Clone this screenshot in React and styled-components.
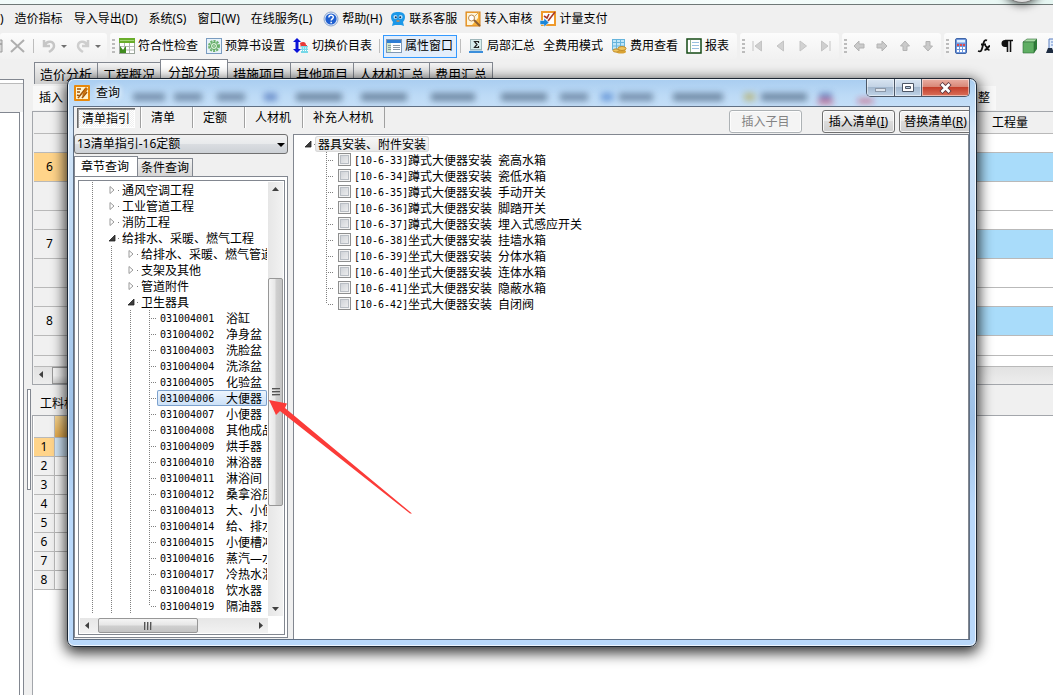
import React from "react";
import styled, { createGlobalStyle, css } from "styled-components";

const MENUS = [
  { id: 1, name: ")" },
  { id: 2, name: "造价指标" },
  { id: 3, name: "导入导出(D)" },
  { id: 4, name: "系统(S)" },
  { id: 5, name: "窗口(W)" },
  { id: 6, name: "在线服务(L)" },
  { id: 7, name: "帮助(H)", icon: "help" },
  { id: 8, name: "联系客服", icon: "service" },
  { id: 9, name: "转入审核", icon: "audit" },
  { id: 10, name: "计量支付", icon: "pay" },
];

const PAGE_TABS = ["造价分析", "工程概况", "分部分项", "措施项目", "其他项目", "人材机汇总", "费用汇总"];

const GRID_ROWS = [
  { id: "a", height: 19 },
  { id: "b", height: 29, no: "6", marked: true, filled: true },
  { id: "c", height: 29 },
  { id: "d", height: 19 },
  { id: "e", height: 29, no: "7", filled: true },
  { id: "f", height: 29 },
  { id: "g", height: 19 },
  { id: "h", height: 29, no: "8", filled: true },
  { id: "i", height: 20 },
  { id: "j", height: 11 },
];

const QUERY_TABS = ["清单", "定额", "人材机", "补充人材机"];

const TREE = [
  { level: 1, name: "通风空调工程" },
  { level: 1, name: "工业管道工程" },
  { level: 1, name: "消防工程" },
  { level: 1, name: "给排水、采暖、燃气工程", open: true },
  { level: 2, name: "给排水、采暖、燃气管道" },
  { level: 2, name: "支架及其他" },
  { level: 2, name: "管道附件" },
  { level: 2, name: "卫生器具", open: true },
];

const LEAVES = [
  "浴缸",
  "净身盆",
  "洗脸盆",
  "洗涤盆",
  "化验盆",
  "大便器",
  "小便器",
  "其他成品",
  "烘手器",
  "淋浴器",
  "淋浴间",
  "桑拿浴房",
  "大、小便",
  "给、排水",
  "小便槽冲",
  "蒸汽—水",
  "冷热水混",
  "饮水器",
  "隔油器",
].map((name, i) => ({ code: `0310040${String(i + 1).padStart(2, "0")}`, name }));

const QUOTAS = [
  { code: "[10-6-33]", name: "蹲式大便器安装", spec: "瓷高水箱" },
  { code: "[10-6-34]", name: "蹲式大便器安装", spec: "瓷低水箱" },
  { code: "[10-6-35]", name: "蹲式大便器安装", spec: "手动开关" },
  { code: "[10-6-36]", name: "蹲式大便器安装", spec: "脚踏开关" },
  { code: "[10-6-37]", name: "蹲式大便器安装", spec: "埋入式感应开关" },
  { code: "[10-6-38]", name: "坐式大便器安装", spec: "挂墙水箱" },
  { code: "[10-6-39]", name: "坐式大便器安装", spec: "分体水箱" },
  { code: "[10-6-40]", name: "坐式大便器安装", spec: "连体水箱" },
  { code: "[10-6-41]", name: "坐式大便器安装", spec: "隐蔽水箱" },
  { code: "[10-6-42]", name: "坐式大便器安装", spec: "自闭阀" },
];

// x, width and colour of what shows through the glass title bar
const GLASS_SPOTS = [
  [60, 32, "#47617f"],
  [101, 28, "#47617f"],
  [144, 28, "#47617f"],
  [191, 13, "#3a62b0"],
  [223, 46, "#3c5470"],
  [288, 46, "#3c5470"],
  [358, 44, "#3c5470"],
  [428, 46, "#3c5470"],
  [487, 28, "#47617f"],
  [528, 12, "#3a74c8"],
  [546, 34, "#47617f"],
  [600, 50, "#3c5470"],
  [671, 11, "#b3a54a"],
  [688, 46, "#3c5470"],
  [746, 13, "#3a4f96"],
];

const ICONS = {
  help: (
    <>
      <circle cx="8" cy="8" r="7" fill="#dfe9f8" stroke="#8ea6cc" />
      <circle cx="8" cy="8" r="5.6" fill="#1f5fd0" />
      <path d="M5.9 6.4c0-2.9 4.4-2.8 4.4-.2 0 1.6-2.1 1.6-2.1 3.3M8.2 10.8v1.5" fill="none" stroke="#fff" strokeWidth="1.5" />
    </>
  ),
  service: (
    <>
      <path d="M1 6C1 2 4 1 8 1s7 1 7 5c0 2-1 4-2 5l1 4-3-1H5l-3 1 1-4C2 10 1 8 1 6z" fill="#1c98e8" />
      <circle cx="5.4" cy="6" r="2" fill="#bfe2fa" />
      <circle cx="10.6" cy="6" r="2" fill="#bfe2fa" />
      <circle cx="5.8" cy="6.2" r="1" fill="#12365c" />
      <circle cx="10.2" cy="6.2" r="1" fill="#12365c" />
      <path d="M6.5 10h3" stroke="#e98a3c" strokeWidth="1.4" />
    </>
  ),
  audit: (
    <>
      <rect x="1" y="1" width="14" height="14" fill="#f7b23a" stroke="#d9821a" />
      <path d="M2 2h11v5l-6 7H2z" fill="#fff4d8" />
      <circle cx="6.5" cy="7" r="3" fill="#fff" stroke="#b98a50" />
      <path d="M9 9l6 6" stroke="#8a5d33" strokeWidth="2" />
      <path d="M14 1L9 6" stroke="#c9a870" />
    </>
  ),
  pay: (
    <>
      <rect x="2" y="1" width="13" height="13" fill="#fff" stroke="#ef9a2b" strokeWidth="2" />
      <path d="M4 5l3 2 2-4M8 10l7-9" fill="none" stroke="#a83a2a" strokeWidth="1.6" />
      <path d="M0 9.5h4V7l5 4.5L4 16v-2.5H0z" fill="#1b86d8" stroke="#fff" strokeWidth=".5" />
    </>
  ),
  check: (
    <>
      <rect x=".5" y=".5" width="15" height="15" fill="#fff" stroke="#9aa59a" />
      <path d="M0 0h16v5H0z" fill="#69ad2b" />
      <path d="M1 2.5h14" stroke="#a7d67a" />
      <path d="M5.5 5v10M10.5 5v10M1 8.5h14M1 12h14" stroke="#b4bab4" />
      <path d="M1 8l3 4 3-4v7H1z" fill="#3f8b1e" />
    </>
  ),
  gear: (
    <>
      <rect x=".5" y=".5" width="15" height="15" fill="#e8f2fa" stroke="#7a9cc0" />
      <circle cx="8" cy="8" r="5" fill="none" stroke="#6bb26b" strokeWidth="2" strokeDasharray="2.2 1" />
      <circle cx="8" cy="8" r="3.6" fill="#d8efd6" stroke="#5aa75e" />
      <circle cx="8" cy="8" r="1.3" fill="#fff" stroke="#5aa75e" />
    </>
  ),
  swap: (
    <>
      <path d="M4 0l4 4H5.5v7H8l-4 4-4-4h2.5V4H0z" fill="#0a12d8" />
      <path d="M7 5c3-2 6-1 6 2h1v3H8z" fill="#e83838" />
      <path d="M8 8h7v7H8z" fill="#76d8e8" />
      <path d="M8 10h7M8 12.500h7" stroke="#fff" strokeDasharray="1 1" />
    </>
  ),
  panel: (
    <>
      <rect x=".5" y="1.5" width="15" height="13" fill="#fff" stroke="#7f98b4" />
      <path d="M1 2h14v3H1z" fill="#2f7ed4" />
      <path d="M1 5h4v9H1z" fill="#cfe6c8" />
      <path d="M2 7.5h3M2 9.5h3M2 11.5h3M7 7.5h7M7 9.5h7M7 11.5h7" stroke="#8b9aa6" />
    </>
  ),
  sigma: (
    <>
      <rect x="2.5" y="1.5" width="11" height="10" fill="#d9eeee" stroke="#9fb7bb" />
      <path d="M10.5 5V3.500h-4l2.500 3-2.500 3h4V8" fill="none" stroke="#222" strokeWidth="1.2" />
      <path d="M1 14h14" stroke="#3b8edb" strokeWidth="2" />
      <path d="M2 12.500h12" stroke="#b9d4e2" />
    </>
  ),
  coins: (
    <>
      <rect x="1.5" y="1.5" width="12" height="10" fill="#bfe6f8" stroke="#66b4dc" />
      <path d="M2 4.500h11M5.500 2v9M9.500 2v9M2 8h11" stroke="#66b4dc" />
      <ellipse cx="10" cy="13.500" rx="5" ry="2" fill="#d9a233" />
      <ellipse cx="11" cy="10.500" rx="4" ry="2" fill="#f1c55c" stroke="#c08d2c" />
      <ellipse cx="5" cy="12.500" rx="3" ry="1.600" fill="#f1c55c" stroke="#c08d2c" />
    </>
  ),
  report: (
    <>
      <rect x="1" y="1" width="14" height="14" fill="#fff" stroke="#154a15" strokeWidth="1.500" />
      <path d="M4.500 2v12" stroke="#8fb28f" />
      <path d="M6 4.500h7M6 7.500h7M6 10.500h7" stroke="#9ac0e0" />
    </>
  ),
  save: <path d="M-6 6h8v8h-8zM-1 2h3v4h-3z" fill="#d6d6d6" stroke="#9c9c9c" />,
  close: <path d="M1 2l13 12M14 2L1 14" stroke="#aeaeae" strokeWidth="2" />,
  undo: <path d="M3 2v6h6M4 7c2-5 9-4 9 1 0 3-2 4-5 6" fill="none" stroke="#c6c6c6" strokeWidth="2.500" />,
  redo: <path d="M13 2v6H7M12 7c-2-5-9-4-9 1 0 3 2 4 5 6" fill="none" stroke="#cecece" strokeWidth="2.500" />,
  first: <path d="M4 3v10M12.500 3v10L6 8z" fill="#cfcfcf" stroke="#c4c4c4" />,
  prev: <path d="M11.500 3v10L5 8z" fill="#d2d2d2" stroke="#c4c4c4" />,
  next: <path d="M5 3v10l6.500-5z" fill="#d2d2d2" stroke="#c4c4c4" />,
  last: <path d="M12 3v10M3.500 3v10L10 8z" fill="#cfcfcf" stroke="#c4c4c4" />,
  left: <path d="M3 8l5-5v3h5v4H8v3z" fill="#cacaca" stroke="#b3b3b3" />,
  right: <path d="M13 8L8 3v3H3v4h5v3z" fill="#cacaca" stroke="#b3b3b3" />,
  up: <path d="M8 3l4.500 5H10v4.500H6V8H3.500z" fill="#cacaca" stroke="#b3b3b3" />,
  down: <path d="M8 13l4.500-5H10V3.500H6V8H3.500z" fill="#cacaca" stroke="#b3b3b3" />,
  calc: (
    <>
      <rect x="2.500" y=".5" width="11" height="15" rx="1.500" fill="#6f97dc" stroke="#3f65a8" />
      <rect x="4" y="2" width="8" height="2.500" fill="#dcefff" />
      <path d="M4 7h8" stroke="#e04848" strokeWidth="2" strokeDasharray="2 1" />
      <path d="M4 10h8M4 13h8" stroke="#fff" strokeWidth="2" strokeDasharray="2 1" />
    </>
  ),
  fx: (
    <path d="M11 2.500C8 1 7.500 5 6.500 9s-1.500 5-4.500 4M5 6.500h5M9 8.500c2-1.500 2 4.500 4.500 3M14 8c-2 0-3 4-5.500 4" fill="none" stroke="#111" strokeWidth="1.800" />
  ),
  para: (
    <>
      <path d="M8 2H6a3 3 0 000 7h2z" fill="#111" />
      <path d="M6 2.500h8M8.500 3v11M11.500 3v11" fill="none" stroke="#111" strokeWidth="1.600" />
    </>
  ),
  cube: (
    <>
      <path d="M1 4l4-3h10l-3 3z" fill="#a8dba4" stroke="#2e6b35" strokeWidth=".6" />
      <path d="M12 4l3-3v10l-3 4z" fill="#2d7a37" />
      <path d="M1 4h11v11H1z" fill="#5fae63" stroke="#2e6b35" strokeWidth=".6" />
    </>
  ),
  find: (
    <>
      <path d="M4 1h12v12H4z" fill="#e3edfa" stroke="#5b7fc0" />
      <path d="M6 4h8M6 7h8" stroke="#6b8fd0" />
      <path d="M1 15l2-5h4l2 5zM9 15l1-5h5v5z" fill="#1d2b40" />
    </>
  ),
  app: (
    <>
      <rect x="0" y="0" width="16" height="16" rx="1" fill="#e8890c" />
      <path d="M2 2h12v12H2z" fill="#fff3cf" />
      <path d="M3 4h4M3 7h3M4 13l8-10M8 13l5-6M3 10l3 1" stroke="#a35407" strokeWidth="1.600" />
      <path d="M12 2l2 2-4 6-2 1 1-3z" fill="#c86f0a" />
    </>
  ),
};

const Icon = ({ name }) => (
  <IconSvg viewBox="0 0 16 16" aria-hidden="true">
    {ICONS[name]}
  </IconSvg>
);

const Tool = ({ icon, children, ...rest }) => (
  <ToolButton {...rest}>
    {icon && <Icon name={icon} />}
    {children}
  </ToolButton>
);

const Toggle = ({ open }) => (
  <ToggleSvg viewBox="0 0 12 16" aria-hidden="true">
    {open ? (
      <path d="M8 5v6H2z" fill="#3c3c3c" stroke="#222" strokeWidth=".8" />
    ) : (
      <path d="M3 4.500v7L7 8z" fill="#fff" stroke="#9a9a9a" />
    )}
    <path d="M11 8.500h1" stroke="#808080" />
  </ToggleSvg>
);

const ARROWS = {
  up: "M0 5l3.500-4L7 5z",
  down: "M0 2l3.500 4L7 2z",
  left: "M5 0L1 3.500 5 7z",
  right: "M2 0l4 3.500L2 7z",
};

const Arrow = ({ dir }) => (
  <ArrowBox>
    <svg width="7" height="7" viewBox="0 0 7 7" aria-hidden="true">
      <path d={ARROWS[dir]} fill="#404040" />
    </svg>
  </ArrowBox>
);

const MainWindow = () => (
  <Page>
    <TopStrip>
      <FloatBall />
    </TopStrip>
    <MenuBar>
      {MENUS.map((menu) => (
        <MenuItem key={menu.id} $wide={!menu.icon}>
          {menu.icon && <Icon name={menu.icon} />}
          {menu.name}
        </MenuItem>
      ))}
    </MenuBar>
    <ToolRow>
      <ToolGroup $width={107} $plain>
        <ToolCut>
          <Icon name="save" />
        </ToolCut>
        <Tool icon="close" aria-label="删除" />
        <Divider />
        <Tool icon="undo" aria-label="撤销" />
        <Caret />
        <Tool icon="redo" aria-label="恢复" />
        <Caret />
      </ToolGroup>
      <ToolGroup $width={627}>
        <Grip />
        <Tool icon="check">符合性检查</Tool>
        <Tool icon="gear">预算书设置</Tool>
        <Tool icon="swap">切换价目表</Tool>
        <Divider />
        <Tool icon="panel" $active>
          属性窗口
        </Tool>
        <Divider />
        <Tool icon="sigma">局部汇总</Tool>
        <Tool>全费用模式</Tool>
        <Tool icon="coins">费用查看</Tool>
        <Tool icon="report">报表</Tool>
      </ToolGroup>
      <ToolGroup $width={99}>
        <Grip />
        <IconRow>
          {["first", "prev", "next", "last"].map((name) => (
            <Tool key={name} icon={name} aria-label={name} $bare />
          ))}
        </IconRow>
      </ToolGroup>
      <ToolGroup $width={99}>
        <Grip />
        <IconRow>
          {["left", "right", "up", "down"].map((name) => (
            <Tool key={name} icon={name} aria-label={name} $bare />
          ))}
        </IconRow>
      </ToolGroup>
      <ToolGroup $width={116}>
        <Grip />
        <IconRow>
          {["calc", "fx", "para", "cube", "find"].map((name) => (
            <Tool key={name} icon={name} aria-label={name} $bare />
          ))}
        </IconRow>
      </ToolGroup>
    </ToolRow>
    <Workspace>
      <SidePane>
        <SideInner />
      </SidePane>
      <Gutter>
        <Splitter />
      </Gutter>
      <Main>
        <PageTabs>
          {PAGE_TABS.map((name) => (
            <PageTab key={name} $active={name === "分部分项"}>
              {name}
            </PageTab>
          ))}
        </PageTabs>
        <EditBar>
          <EditButton>插入</EditButton>
          <EditButton>整</EditButton>
        </EditBar>
        <GridFrame>
          <Grid>
            <colgroup>
              <col width="62" />
              <col />
              <col width="77" />
            </colgroup>
            <thead>
              <tr>
                <HeadCell />
                <HeadCell />
                <HeadCell>工程量</HeadCell>
              </tr>
            </thead>
            <tbody>
              {GRID_ROWS.map((row) => (
                <GridRow key={row.id} $height={row.height}>
                  <RowHead $marked={row.marked}>{row.no}</RowHead>
                  <GridCell $filled={row.filled} />
                  <GridCell $filled={row.filled} />
                </GridRow>
              ))}
            </tbody>
          </Grid>
          <GridScroll>
            <Arrow dir="left" />
            <GridThumb />
          </GridScroll>
        </GridFrame>
        <DetailBar>工料机</DetailBar>
        <DetailFrame>
          <DetailGrid>
            <colgroup>
              <col width="21" />
              <col />
            </colgroup>
            <thead>
              <tr>
                <DetailCorner />
                <HeadCell $marked />
              </tr>
            </thead>
            <tbody>
              {[1, 2, 3, 4, 5, 6, 7, 8].map((no) => (
                <GridRow key={no} $height={19}>
                  <DetailHead $marked={no === 1}>{no}</DetailHead>
                  <DetailCell $current={no === 1} />
                </GridRow>
              ))}
            </tbody>
          </DetailGrid>
        </DetailFrame>
      </Main>
    </Workspace>
  </Page>
);

const ChapterTree = () => (
  <TreeBox>
    <TreeList>
      {TREE.map((node) => (
        <TreeRow key={node.name}>
          {Array.from({ length: node.level }, (_, i) => (
            <Guide key={i} />
          ))}
          <Toggle open={node.open} />
          <NodeLabel>{node.name}</NodeLabel>
        </TreeRow>
      ))}
      {LEAVES.map((leaf, i) => (
        <TreeRow key={leaf.code}>
          <Guide />
          <Guide />
          <Guide />
          <Branch $last={i === LEAVES.length - 1} />
          <NodeLabel $selected={leaf.name === "大便器"}>
            <Code>{leaf.code}</Code>
            <LeafName>{leaf.name}</LeafName>
          </NodeLabel>
        </TreeRow>
      ))}
    </TreeList>
    <VScroll>
      <Arrow dir="up" />
      <Space $grow={81} />
      <VThumb>
        <GripLines />
      </VThumb>
      <Space $grow={95} />
      <Arrow dir="down" />
    </VScroll>
    <HScroll>
      <Arrow dir="left" />
      <HThumb>
        <GripLines $vertical />
      </HThumb>
      <Space $grow={1} />
      <Arrow dir="right" />
    </HScroll>
  </TreeBox>
);

const QueryDialog = () => (
  <Dialog role="dialog" aria-label="查询">
    <TitleBar>
      <Glass aria-hidden="true">
        <defs>
          <filter id="soft" x="-20%" y="-100%" width="140%" height="300%">
            <feGaussianBlur stdDeviation="3" />
          </filter>
        </defs>
        <g filter="url(#soft)" opacity=".6">
          {GLASS_SPOTS.map(([x, width, color]) => (
            <rect key={x} x={x} y="14" width={width} height="8" fill={color} />
          ))}
          <rect x="745" y="21" width="15" height="4" fill="#d01f3a" />
          <rect x="785" y="20" width="15" height="4" fill="#d01f3a" />
        </g>
      </Glass>
      <Icon name="app" />
      <Title>查询</Title>
      <WindowButtons>
        <WindowButton aria-label="最小化" $width={27}>
          <svg width="13" height="12" viewBox="0 0 13 12">
            <rect x="1.500" y="6.500" width="10" height="3" fill="#dfe6ee" stroke="#8c98a8" />
          </svg>
        </WindowButton>
        <WindowButton aria-label="最大化" $width={27}>
          <svg width="13" height="12" viewBox="0 0 13 12">
            <path d="M.5 1.500h11v8H.5z" fill="#fff" stroke="#4c5666" />
            <path d="M3.500 4.500h5v2h-5z" fill="#b8cbe0" stroke="#4c5666" />
          </svg>
        </WindowButton>
        <WindowButton aria-label="关闭" $width={48} $danger>
          <svg width="13" height="12" viewBox="0 0 13 12">
            <path d="M2 1.500l9 9M11 1.500l-9 9" stroke="#5b3640" strokeWidth="4.400" />
            <path d="M2.500 2l8 8M10.500 2l-8 8" stroke="#fff" strokeWidth="2.600" />
          </svg>
        </WindowButton>
      </WindowButtons>
    </TitleBar>
    <DialogBody>
      <QueryBar>
        <QueryTabs>
          <GuideTab>清单指引</GuideTab>
          {QUERY_TABS.map((name) => (
            <QueryTab key={name} $short={name.length < 3}>
              {name}
            </QueryTab>
          ))}
        </QueryTabs>
        <Actions>
          <ActionButton disabled>插入子目</ActionButton>
          <ActionButton $spaced>
            插入清单(<u>I</u>)
          </ActionButton>
          <ActionButton>
            替换清单(<u>R</u>)
          </ActionButton>
        </Actions>
      </QueryBar>
      <Panes>
        <ChapterPane>
          <SelectWrap>
            <BookSelect aria-label="定额库" defaultValue="13">
              <option value="13">13清单指引-16定额</option>
            </BookSelect>
          </SelectWrap>
          <SubTabs>
            <SubTab $active>章节查询</SubTab>
            <SubTab>条件查询</SubTab>
          </SubTabs>
          <TabPanel>
            <ChapterTree />
          </TabPanel>
        </ChapterPane>
        <QuotaPane>
          <TreeRow>
            <Toggle open />
            <RootLabel>器具安装、附件安装</RootLabel>
          </TreeRow>
          {QUOTAS.map((quota, i) => (
            <TreeRow key={quota.code}>
              <Indent />
              <Branch $last={i === QUOTAS.length - 1} />
              <QuotaLabel>
                <CheckBox type="checkbox" />
                <Code>{quota.code}</Code>
                {quota.name}
                <span>{quota.spec}</span>
              </QuotaLabel>
            </TreeRow>
          ))}
        </QuotaPane>
      </Panes>
    </DialogBody>
  </Dialog>
);

const App = () => {
  return (
    <>
      <GlobalStyle />
      <MainWindow />
      <Overlay>
        <QueryDialog />
      </Overlay>
      <Pointer viewBox="0 0 144 116" aria-hidden="true">
        <path d="M1 1l18 3.500-2 4.500L144 114.500 142 114.500 12 12l-4 4z" fill="#fb3b38" />
      </Pointer>
    </>
  );
};

const GlobalStyle = createGlobalStyle`
  * {
    box-sizing: border-box;
  }

  body {
    margin: 0;
    overflow: hidden;
    background: white;
    color: black;
    font: 12px/16px "Noto Sans", "Noto Sans CJK SC", sans-serif;
  }

  button,
  select,
  input {
    margin: 0;
    padding: 0;
    border: none;
    background: none;
    color: inherit;
    font: inherit;
    white-space: nowrap;
  }
`;

const line = "#828790";
const dotsDown = "repeating-linear-gradient(to bottom, #808080 0 1px, transparent 1px 2px)";
const dotsRight = "repeating-linear-gradient(to right, #808080 0 1px, transparent 1px 2px)";

const IconSvg = styled.svg`
  flex: none;
  position: relative;
  width: 16px;
  height: 16px;
`;

const Page = styled.div`
  display: flex;
  flex-direction: column;
  height: 100vh;
  overflow: hidden;
  background: #f0f0f0;
`;

const TopStrip = styled.div`
  flex: none;
  position: relative;
  height: 5px;
  background: linear-gradient(to right, #f2fbfa, #e9f8f6 40%, #f6fdfc 70%, #e6f6f2);
  border-bottom: 1px solid #6f7877;
`;

const FloatBall = styled.div`
  position: absolute;
  right: 10px;
  bottom: 1px;
  width: 42px;
  height: 42px;
  border: 1px solid #777;
  border-radius: 50%;
  background: #ddd;
  box-shadow: 0 2px 8px rgba(0, 0, 0, 0.6);
`;

const MenuBar = styled.nav`
  flex: none;
  display: flex;
  align-items: center;
  gap: 8px;
  height: 28px;
`;

const MenuItem = styled.button`
  display: flex;
  align-items: center;
  gap: 3px;
  padding-right: ${(props) => (props.$wide ? 3 : 0)}px;
`;

const ToolRow = styled.div`
  flex: none;
  display: flex;
  gap: 3px;
  height: 26px;
`;

const ToolGroup = styled.div`
  flex: none;
  display: flex;
  align-items: center;
  width: ${(props) => props.$width}px;
  padding-left: ${(props) => (props.$plain ? 0 : 2)}px;
  border-radius: 3px;
  background: linear-gradient(#fcfcfc, #f1f1f1);
`;

const ToolButton = styled.button`
  display: flex;
  align-items: center;
  gap: 3px;
  height: 23px;
  padding: 0 ${(props) => (props.$bare ? 0 : 4)}px;

  ${(props) =>
    props.$active &&
    css`
      padding: 0 3px 0 2px;
      border: 1px solid #3399ff;
      background: #e3eefb;
    `}
`;

const ToolCut = styled.div`
  width: 6px;
  height: 16px;
  overflow: hidden;
`;

const IconRow = styled.div`
  flex: 1;
  display: flex;
  gap: 7px;
  padding-left: 4px;
  overflow: hidden;
`;

const Divider = styled.div`
  width: 1px;
  height: 14px;
  margin: 0 3px;
  background: #bdbdbd;
`;

const Caret = styled.div`
  margin: 0 4px 0 0;
  border: 3px solid transparent;
  border-top-color: #707070;
  border-bottom: none;
`;

const Grip = styled.div`
  width: 3px;
  height: 15px;
  background: repeating-linear-gradient(#bcbcbc 0 2px, transparent 2px 4px);
`;

const Workspace = styled.div`
  flex: 1;
  display: flex;
  min-height: 0;
`;

const SidePane = styled.div`
  flex: none;
  display: flex;
  width: 24px;
  margin-top: 20px;
  padding: 32px 3px 0 0;
  border: solid ${line};
  border-width: 1px 1px 0 0;
  background: linear-gradient(white 3px, #bbb 3px 4px, #f0f0f0 4px 32px, white 32px);
`;

const SideInner = styled.div`
  flex: 1;
  border: solid ${line};
  border-width: 1px 1px 0 0;
  background: white;
`;

const Gutter = styled.div`
  flex: none;
  width: 8px;
  padding: 330px 1px 0 3px;
`;

const Splitter = styled.div`
  height: 101px;
  border: 1px solid ${line};
  background: white;
`;

const Main = styled.main`
  flex: 1;
  display: flex;
  flex-direction: column;
  min-width: 0;
`;

const PageTabs = styled.div`
  flex: none;
  display: flex;
  align-items: flex-end;
  height: 25px;
  padding-left: 2px;
`;

const PageTab = styled.button`
  height: ${(props) => (props.$active ? 25 : 22)}px;
  margin-right: -1px;
  padding: 0 ${(props) => (props.$active ? 7 : 5)}px;
  border: 1px solid ${line};
  border-bottom: none;
  background: ${(props) => (props.$active ? "white" : "linear-gradient(#f4f4f4, #e2e2e2 45%, #cfcfcf)")};
  font-size: 13px;
`;

const EditBar = styled.div`
  flex: none;
  display: flex;
  justify-content: space-between;
  align-items: center;
  height: 27px;
  padding: 0 57px 0 1px;
`;

const EditButton = styled.button`
  padding: 4px 6px;
  background: #f8f8f8;
`;

const GridFrame = styled.div`
  flex: none;
  border: solid #a3a6ab;
  border-width: 1px 0 1px 1px;
  padding-left: 1px;
`;

const Grid = styled.table`
  width: 100%;
  table-layout: fixed;
  border-collapse: separate;
  border-spacing: 0;
  background: white;

  th,
  td {
    padding: 0;
    border-bottom: 1px solid #b9b9b9;
    font-weight: normal;
  }

  thead th:last-child {
    padding-left: 16px;
    text-align: left;
  }
`;

const DetailGrid = styled(Grid)`
  width: 320px;
`;

const HeadCell = styled.th`
  height: 22px;
  background: ${(props) => (props.$marked ? "linear-gradient(#f9d793, #e5ab4c)" : "#f0f0f0")};
`;

const DetailCorner = styled(HeadCell)`
  border-right: 1px solid #b9b9b9;
`;

const GridRow = styled.tr`
  height: ${(props) => props.$height}px;
  line-height: 10px;
`;

const RowHead = styled.th`
  && {
    padding-left: 12px;
  }
  background: ${(props) => (props.$marked ? "#ffd48a" : "#f0f0f0")};
  text-align: left;
`;

const GridCell = styled.td`
  background: ${(props) => (props.$filled ? "#a9dcfa" : "white")};
`;

const GridScroll = styled.div`
  display: flex;
  height: 17px;
  background: linear-gradient(#e2e2e2, #ededed);
`;

const GridThumb = styled.div`
  width: 300px;
  margin-left: 3px;
  border: 1px solid #979797;
  background: linear-gradient(#f4f4f4 50%, #cfcfcf);
`;

const DetailBar = styled.div`
  flex: none;
  height: 30px;
  padding: 11px 8px 0;
`;

const DetailFrame = styled.div`
  flex: 1;
  padding-left: 1px;
  border: solid #a3a6ab;
  border-width: 1px 0 0 1px;
  background: white;
`;

const DetailHead = styled.th`
  background: ${(props) => (props.$marked ? "#ffd48a" : "#f0f0f0")};
  border-right: 1px solid #b9b9b9;
`;

const DetailCell = styled.td`
  background: ${(props) => (props.$current ? "#d3e8fa" : "white")};
`;

const Overlay = styled.div`
  position: absolute;
  inset: 0;
  display: flex;
  padding: 78px 76px 48px 67px;
`;

const Dialog = styled.section`
  flex: 1;
  display: flex;
  flex-direction: column;
  min-width: 0;
  padding: 0 6px 6px 5px;
  border: 1px solid #1d2733;
  border-radius: 7px;
  background: linear-gradient(#a9cdf0 0, #bcdaf6 16px, #d5e7f9 50px, #b4d3f3 35%, #9dc0e6 60%, #b9d8fa 75%);
  box-shadow: inset 0 0 0 1px rgba(255, 255, 255, 0.75), 0 4px 14px 2px rgba(0, 0, 0, 0.8);
`;

const TitleBar = styled.header`
  flex: none;
  position: relative;
  display: flex;
  align-items: center;
  height: 27px;
  padding-left: 1px;
`;

const Glass = styled.svg`
  position: absolute;
  inset: 0;
  width: 100%;
  height: 100%;
`;

const Title = styled.h1`
  position: relative;
  flex: 1;
  margin: 0;
  padding-left: 6px;
  font-size: 12px;
  font-weight: normal;
  text-shadow: 0 0 6px white, 0 0 6px white;
`;

const WindowButtons = styled.div`
  position: relative;
  align-self: flex-start;
  display: flex;
  height: 18px;
  border: 1px solid #4c5868;
  border-top: none;
  border-radius: 0 0 5px 5px;
  overflow: hidden;
`;

const WindowButton = styled.button`
  display: flex;
  justify-content: center;
  align-items: center;
  width: ${(props) => props.$width}px;
  box-shadow: inset 0 0 0 1px rgba(255, 255, 255, 0.5);
  background: linear-gradient(#d8e5f2, #c2d2e4 48%, #a3b8cf 50%, #c0d4e8);

  & + & {
    border-left: 1px solid #4c5868;
  }

  ${(props) =>
    props.$danger &&
    css`
      background: linear-gradient(#eab0a4, #d98878 45%, #c4402c 50%, #d9705a);
    `}
`;

const DialogBody = styled.div`
  flex: 1;
  display: flex;
  flex-direction: column;
  min-height: 0;
  border: 1px solid #5f6f84;
  background: #f0f0f0;
`;

const QueryBar = styled.div`
  flex: none;
  display: flex;
  justify-content: space-between;
  height: 27px;
  overflow: hidden;
`;

const QueryTabs = styled.div`
  display: flex;
  align-items: flex-start;
  padding-left: 3px;
`;

const GuideTab = styled.button`
  height: 20px;
  margin: 1px 5px 0 0;
  padding: 0 5px 0 4px;
  border: solid #696969;
  border-width: 1px 0 0 1px;
  box-shadow: inset 1px 1px 0 #a0a0a0, inset -1px -1px 0 white;
  background: repeating-conic-gradient(#fff 0 25%, #efefef 0 50%) 0 0 / 2px 2px;
`;

const QueryTab = styled.button`
  height: 21px;
  padding: 0 ${(props) => (props.$short ? 17 : 11)}px 0 10px;
  border-left: 1px solid #a0a0a0;
  box-shadow: inset 1px 0 0 white;

  &:last-child {
    border-right: 1px solid #a0a0a0;
  }
`;

const Actions = styled.div`
  display: flex;
  gap: 4px;
  margin-right: -3px;
  padding-top: 3px;
`;

const ActionButton = styled.button`
  width: 73px;
  height: 23px;
  margin-left: ${(props) => (props.$spaced ? 16 : 0)}px;
  border: 1px solid #707070;
  border-radius: 3px;
  background: linear-gradient(#f4f4f4, #ebebeb 48%, #dcdcdc 50%, #cfcfcf);
  box-shadow: inset 0 0 0 1px rgba(255, 255, 255, 0.8);

  &:disabled {
    border-color: #adb2b5;
    background: #f4f4f4;
    color: #838383;
  }
`;

const Panes = styled.div`
  flex: 1;
  display: flex;
  gap: 5px;
  min-height: 0;
`;

const ChapterPane = styled.div`
  flex: none;
  display: flex;
  flex-direction: column;
  width: 214px;
  padding-bottom: 1px;
`;

const SelectWrap = styled.div`
  position: relative;
  height: 20px;

  &::after {
    content: "";
    position: absolute;
    top: 9px;
    right: 3px;
    border: 4px solid transparent;
    border-top-color: black;
    border-bottom: none;
    pointer-events: none;
  }
`;

const BookSelect = styled.select`
  appearance: none;
  display: block;
  width: 100%;
  height: 20px;
  padding-left: 2px;
  border: 1px solid #707070;
  border-radius: 3px;
  background: linear-gradient(#f2f2f2, #e8eaec 48%, #dadde1 50%, #cdd1d6);
`;

const SubTabs = styled.div`
  display: flex;
  align-items: flex-end;
  height: 22px;
  padding-top: 2px;
`;

const SubTab = styled.button`
  height: ${(props) => (props.$active ? 20 : 18)}px;
  padding: 0 8px 0 ${(props) => (props.$active ? 6 : 3)}px;
  border: 1px solid ${line};
  border-bottom: none;
  background: ${(props) => (props.$active ? "white" : "linear-gradient(#f2f2f2, #d6d6d6)")};

  & + & {
    padding-right: 3px;
    border-left: none;
  }
`;

const TabPanel = styled.div`
  flex: 1;
  display: flex;
  min-height: 0;
  padding: 3px 2px 2px 3px;
  border: 1px solid ${line};
  background: white;
`;

const TreeBox = styled.div`
  flex: 1;
  display: grid;
  grid-template: minmax(0, 1fr) 15px / minmax(0, 1fr) 15px;
  row-gap: 2px;
  min-width: 0;
  padding: 1px;
  border: 1px solid ${line};
`;

const TreeList = styled.div`
  overflow: hidden;
  padding: 0 1px 0 8px;
`;

const TreeRow = styled.div`
  display: flex;
  height: 16px;
  line-height: 18px;
  white-space: nowrap;
`;

const Guide = styled.span`
  flex: none;
  width: 19px;
  background: ${dotsDown} 4px 0 / 1px 100% no-repeat;
`;

const Branch = styled.span`
  flex: none;
  width: 12px;
  background: ${dotsDown} 4px 0 / 1px ${(props) => (props.$last ? "8px" : "100%")} no-repeat,
    ${dotsRight} 6px 8px / 8px 1px no-repeat;
`;

const Indent = styled.span`
  flex: none;
  width: 19px;
`;

const ToggleSvg = styled.svg`
  flex: none;
  width: 12px;
  height: 16px;
`;

const NodeLabel = styled.span`
  display: flex;
  flex: 1;
  min-width: 0;
  overflow: hidden;
  padding-left: 3px;

  ${(props) =>
    props.$selected &&
    css`
      border-radius: 2px;
      background: linear-gradient(#eff6fd, #c9dff7);
      box-shadow: inset 0 0 0 1px #7da2ce;
    `}
`;

const Code = styled.span`
  flex: none;
  width: 54px;
  font-family: "DejaVu Sans Mono", monospace;
  font-size: 10px;
`;

const LeafName = styled.span`
  margin-left: 12px;
`;

const ArrowBox = styled.div`
  flex: none;
  display: flex;
  justify-content: center;
  align-items: center;
  width: 15px;
  height: 15px;
`;

const Space = styled.div`
  flex: ${(props) => props.$grow};
`;

const VScroll = styled.div`
  display: flex;
  flex-direction: column;
  background: linear-gradient(to right, #e6e6e6, #f2f2f2);
`;

const VThumb = styled.div`
  flex: 227;
  display: flex;
  justify-content: center;
  align-items: center;
  border: 1px solid #979797;
  border-radius: 2px;
  background: linear-gradient(to right, #f5f5f5, #e6e6e6 48%, #d0d0d0 52%, #c4c4c4);
`;

const HScroll = styled.div`
  display: flex;
  background: linear-gradient(#e6e6e6, #f2f2f2);
`;

const HThumb = styled.div`
  display: flex;
  justify-content: center;
  align-items: center;
  width: 100px;
  margin-left: 3px;
  border: 1px solid #979797;
  border-radius: 2px;
  background: linear-gradient(#f5f5f5, #e6e6e6 48%, #d0d0d0 52%, #c4c4c4);
`;

const GripLines = styled.div`
  width: 8px;
  height: 8px;
  background: repeating-linear-gradient(
    ${(props) => (props.$vertical ? "to right" : "to bottom")},
    #555 0 1px,
    #aaa 1px 2px,
    transparent 2px 3px
  );
`;

const QuotaPane = styled.div`
  flex: 1;
  min-width: 0;
  padding: 1px 0 0 9px;
  border: solid ${line};
  border-width: 1px 1px 0 1px;
  background: white;
`;

const RootLabel = styled.span`
  padding: 0 3px;
  border-radius: 3px;
  background: linear-gradient(#f8f8f8, #e6e6e6);
  box-shadow: inset 0 0 0 1px #d9d9d9;
`;

const QuotaLabel = styled.label`
  display: flex;
  padding-left: 4px;

  span:last-child {
    margin-left: 6px;
  }
`;

const CheckBox = styled.input`
  appearance: none;
  width: 13px;
  height: 13px;
  margin: 1px 3px 0 0;
  border: 1px solid #8e8f8f;
  background: linear-gradient(135deg, #c8ccd2, #f4f4f4);
  box-shadow: inset 0 0 0 1px #f4f4f4, inset 0 0 0 2px #b9bec4;
`;

const Pointer = styled.svg`
  position: absolute;
  top: 399px;
  left: 268px;
  width: 144px;
  height: 116px;
`;

export default App;
